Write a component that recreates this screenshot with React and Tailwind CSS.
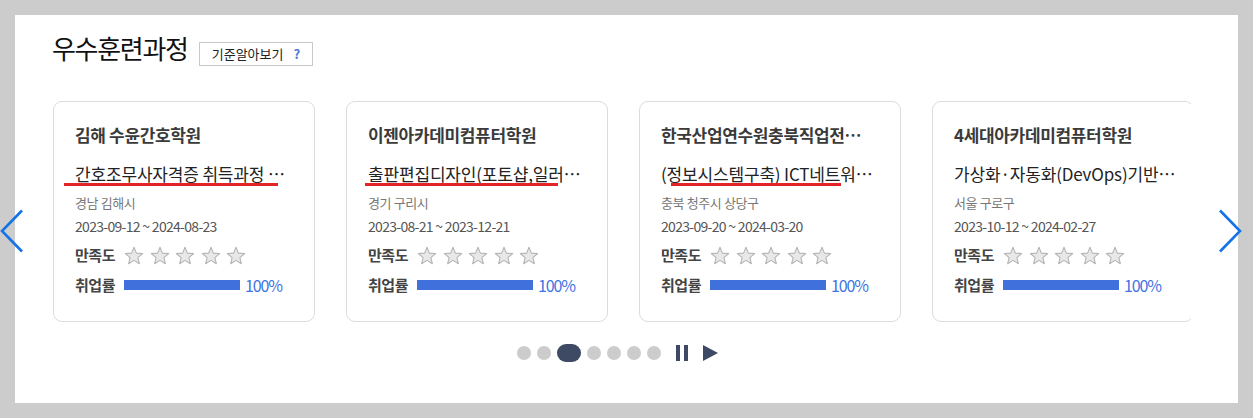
import React from "react";

const FONT = { fontFamily: '"Noto Sans CJK KR", "Noto Sans", sans-serif' };

const cards = [
  {
    name: "김해 수윤간호학원",
    title: "간호조무사자격증 취득과정 …",
    loc: "경남 김해시",
    date: "2023-09-12 ~ 2024-08-23",
    line: { left: 10, width: 214 },
  },
  {
    name: "이젠아카데미컴퓨터학원",
    title: "출판편집디자인(포토샵,일러…",
    loc: "경기 구리시",
    date: "2023-08-21 ~ 2023-12-21",
    line: { left: 18, width: 193 },
  },
  {
    name: "한국산업연수원충북직업전…",
    title: "(정보시스템구축) ICT네트워…",
    loc: "충북 청주시 상당구",
    date: "2023-09-20 ~ 2024-03-20",
    line: { left: 31, width: 170 },
  },
  {
    name: "4세대아카데미컴퓨터학원",
    title: "가상화·자동화(DevOps)기반…",
    loc: "서울 구로구",
    date: "2023-10-12 ~ 2024-02-27",
    line: null,
  },
];

function Star() {
  return (
    <svg width="20" height="19" viewBox="0 0 24 23">
      <polygon
        points="12,1.5 14.9,8.6 22.5,9.1 16.7,14 18.5,21.4 12,17.4 5.5,21.4 7.3,14 1.5,9.1 9.1,8.6"
        fill="#e8e8e8"
        stroke="#b3b3b3"
        strokeWidth="1.3"
        strokeLinejoin="round"
      />
    </svg>
  );
}

function Card({ c }) {
  return (
    <div className="relative w-[262px] h-[221px] shrink-0 rounded-[9px] border border-[#dcdcdc] bg-white pl-[21px] pt-[21px]">
      <div className="h-[24px] leading-[24px] text-[17px] font-bold text-[#3a3a3a] tracking-[-0.02em] whitespace-nowrap">
        {c.name}
      </div>
      <div className="mt-[15px] h-[24px] leading-[24px] text-[17px] text-[#222] tracking-[-0.01em] whitespace-nowrap">
        {c.title}
      </div>
      <div className="mt-[8px] h-[18px] leading-[18px] text-[13px] text-[#777] tracking-[-0.03em]">
        {c.loc}
      </div>
      <div className="mt-[4px] h-[20px] leading-[20px] text-[14px] text-[#555] tracking-[-0.05em]">
        {c.date}
      </div>
      <div className="mt-[7px] h-[24px] flex items-center">
        <span className="w-[49px] text-[15px] font-semibold text-[#444] tracking-[-0.03em]">만족도</span>
        <div className="flex gap-[5.5px]">
          <Star />
          <Star />
          <Star />
          <Star />
          <Star />
        </div>
      </div>
      <div className="mt-[6px] h-[24px] flex items-center">
        <span className="w-[49px] text-[15px] font-semibold text-[#444] tracking-[-0.03em]">취업률</span>
        <div className="w-[116px] h-[10px] bg-[#3f70dc]" />
        <span className="ml-[5px] text-[16px] text-[#3f74e4] tracking-[-0.07em]">100%</span>
      </div>
      {c.line && (
        <div
          className="absolute top-[81px] h-[3px] bg-[#e42528]"
          style={{ left: c.line.left, width: c.line.width }}
        />
      )}
    </div>
  );
}

export default function App() {
  return (
    <div className="relative w-[1253px] h-[418px] bg-[#cccccc] pt-[15px] pl-[15px]" style={FONT}>
      <div className="w-[1223px] h-[388px] bg-white pt-[16px]">
        <div className="flex items-start pl-[37px]">
          <h2 className="text-[26px] leading-[34px] font-normal text-[#111] tracking-[-0.05em]">우수훈련과정</h2>
          <div className="ml-[11px] mt-[11px] h-[24px] pl-[12px] pr-[12px] border border-[#c8c8c8] flex items-center text-[13px] text-[#222]">
            기준알아보기
            <span className="ml-[10px] text-[#4a7be0] font-bold">?</span>
          </div>
        </div>
        <div className="mt-[35px] ml-[38px] w-[1138px] overflow-hidden">
          <div className="flex gap-[31px]">
            {cards.map((c, i) => (
              <Card key={i} c={c} />
            ))}
          </div>
        </div>
        <div className="mt-[22px] flex items-center justify-center h-[18px]">
          <div className="flex items-center gap-[6px] ml-[-18px]">
            <span className="w-[14px] h-[14px] rounded-full bg-[#cccccc]" />
            <span className="w-[14px] h-[14px] rounded-full bg-[#cccccc]" />
            <span className="w-[24px] h-[18px] rounded-[9px] bg-[#3e4a63]" />
            <span className="w-[14px] h-[14px] rounded-full bg-[#cccccc]" />
            <span className="w-[14px] h-[14px] rounded-full bg-[#cccccc]" />
            <span className="w-[14px] h-[14px] rounded-full bg-[#cccccc]" />
            <span className="w-[14px] h-[14px] rounded-full bg-[#cccccc]" />
          </div>
          <div className="ml-[15px] flex gap-[4px] h-[16px]">
            <span className="w-[4px] h-[16px] bg-[#3e4a63]" />
            <span className="w-[4px] h-[16px] bg-[#3e4a63]" />
          </div>
          <svg className="ml-[15px]" width="15" height="16" viewBox="0 0 15 16">
            <polygon points="0,0 15,8 0,16" fill="#3e4a63" />
          </svg>
        </div>
      </div>
      <svg className="absolute left-0 top-[209px]" width="24" height="44" viewBox="0 0 24 44">
        <polyline points="22,1.5 2,22 22,42.5" fill="none" stroke="#1473e6" strokeWidth="2.6" />
      </svg>
      <svg className="absolute left-[1218px] top-[209px]" width="24" height="44" viewBox="0 0 24 44">
        <polyline points="2,1.5 22,22 2,42.5" fill="none" stroke="#1473e6" strokeWidth="2.6" />
      </svg>
    </div>
  );
}
